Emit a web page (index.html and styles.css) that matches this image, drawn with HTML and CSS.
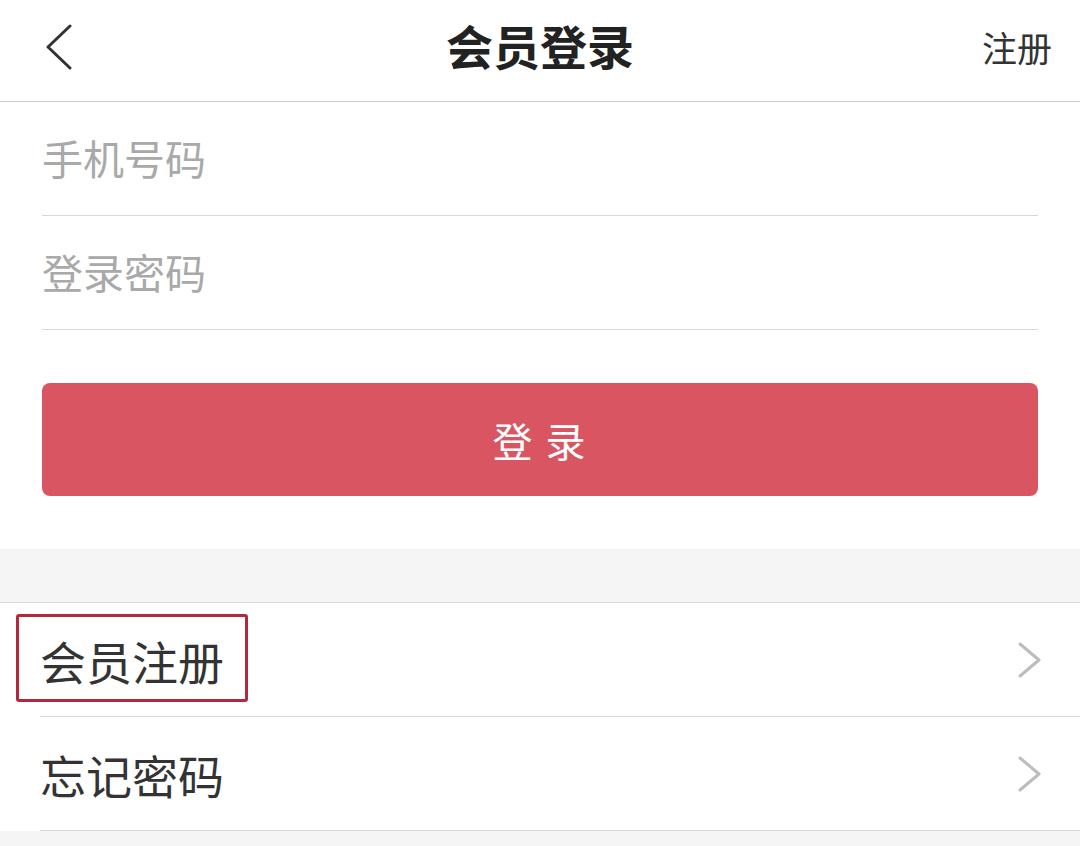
FILE: index.html
```html
<!DOCTYPE html>
<html lang="zh-CN">
<head>
<meta charset="utf-8">
<title>会员登录</title>
<link rel="stylesheet" href="styles.css">
</head>
<body>
<div class="page">
  <header class="topbar">
    <div class="back">
      <svg width="28" height="46" viewBox="0 0 28 46"><polyline points="25,2 3,23 25,44" fill="none" stroke="#333" stroke-width="3" stroke-linecap="round" stroke-linejoin="round"/></svg>
    </div>
    <h1 class="title">会员登录</h1>
    <div class="reg">注册</div>
  </header>

  <section class="form">
    <div class="field">手机号码</div>
    <div class="field">登录密码</div>
    <div class="btn">登 录</div>
  </section>

  <div class="gap"></div>

  <ul class="menu">
    <li class="item">
      <div class="item-inner">
        <span class="label highlight">会员注册</span>
        <svg class="arrow" width="24" height="36" viewBox="0 0 24 36"><polyline points="2,2 21,18 2,34" fill="none" stroke="#bdbdbd" stroke-width="3" stroke-linecap="round" stroke-linejoin="round"/></svg>
      </div>
    </li>
    <li class="item">
      <div class="item-inner">
        <span class="label">忘记密码</span>
        <svg class="arrow" width="24" height="36" viewBox="0 0 24 36"><polyline points="2,2 21,18 2,34" fill="none" stroke="#bdbdbd" stroke-width="3" stroke-linecap="round" stroke-linejoin="round"/></svg>
      </div>
    </li>
  </ul>
  <div class="footer-fill"></div>
</div>
</body>
</html>
```

FILE: styles.css
```css
* { box-sizing: border-box; }
html, body {
  margin: 0;
  padding: 0;
  background: #fff;
}
body {
  font-family: "Noto Sans CJK SC", "Noto Sans", sans-serif;
  color: #333;
}
.page {
  width: 1080px;
  height: 846px;
  display: flex;
  flex-direction: column;
  overflow: hidden;
}
.topbar {
  height: 102px;
  flex: none;
  display: grid;
  grid-template-columns: 1fr auto 1fr;
  align-items: center;
  border-bottom: 1px solid #cfcfcf;
  padding: 0 28px 12px 28px;
}
.back {
  display: flex;
  align-items: center;
  padding-left: 17px;
  padding-top: 4px;
}
.back svg { display: block; }
.title {
  margin: 0;
  font-size: 47px;
  font-weight: 700;
  color: #222;
  line-height: 1;
}
.reg {
  justify-self: end;
  font-size: 35px;
  color: #333;
  line-height: 1;
  padding-top: 4px;
}
.form {
  padding: 0 42px;
  flex: none;
}
.field {
  height: 114px;
  border-bottom: 1px solid #d9d9d9;
  display: flex;
  align-items: center;
  font-size: 41px;
  color: #a9a9a9;
  line-height: 1;
  padding-bottom: 2px;
}
.btn {
  margin: 53px 0 53px;
  height: 113px;
  border-radius: 8px;
  background: #d95562;
  color: #fff;
  font-size: 40px;
  display: flex;
  align-items: center;
  justify-content: center;
  letter-spacing: 2px;
  line-height: 1;
}
.gap {
  height: 54px;
  flex: none;
  background: #f5f5f5;
  border-bottom: 1px solid #dcdcdc;
}
.menu {
  list-style: none;
  margin: 0;
  padding: 0;
  flex: none;
}
.item {
  padding-left: 40px;
}
.item-inner {
  height: 114px;
  border-bottom: 1px solid #d9d9d9;
  display: flex;
  align-items: center;
  justify-content: space-between;
  padding-right: 38px;
}
.label {
  font-size: 46px;
  color: #333;
  line-height: 1;
  position: relative;
}
.highlight::after {
  content: "";
  position: absolute;
  left: -24px;
  right: -24px;
  top: -23px;
  bottom: -19px;
  border: 3px solid #b3283b;
  border-radius: 3px;
}
.arrow { display: block; }
.footer-fill {
  flex: 1;
  background: #f5f5f5;
}
```
